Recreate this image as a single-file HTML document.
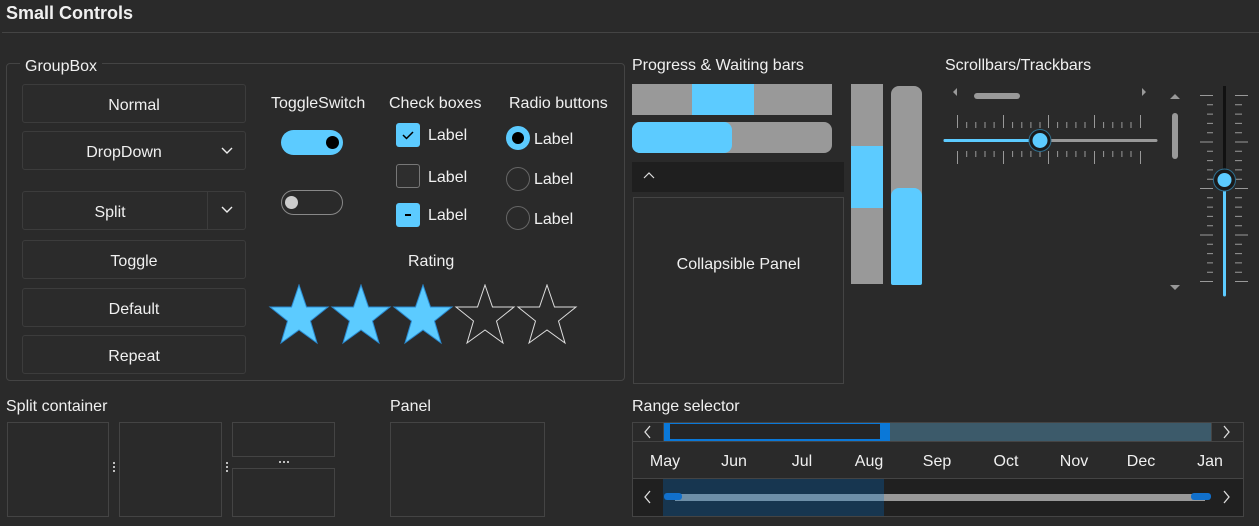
<!DOCTYPE html>
<html><head><meta charset="utf-8"><style>
*{box-sizing:border-box;margin:0;padding:0}
body{width:1259px;height:526px;background:#2a2a2a;color:#f0f0f0;font-family:"Liberation Sans",sans-serif;font-size:16px;position:relative;overflow:hidden}
.a{position:absolute}
.t{position:absolute;white-space:nowrap;line-height:20px}
.btn{position:absolute;left:22px;width:224px;height:39px;border:1px solid #3c3c3c;border-radius:3px;background:#2b2b2b;display:flex;align-items:center;justify-content:center;padding-top:4px}
.cb{position:absolute;left:396px;width:24px;height:24px;border-radius:3px}
.rb{position:absolute;left:506px;width:24px;height:24px;border-radius:50%}
.box{position:absolute;border:1px solid #444}
.mo{position:absolute;top:452px;width:50px;text-align:center;line-height:20px}
</style></head><body>
<div class="t" style="left:6px;top:3px;font-size:18px;font-weight:bold">Small Controls</div>
<div class="a" style="left:2px;right:0;top:32px;height:1px;background:#444"></div>

<div class="a" style="left:6px;top:63px;width:619px;height:318px;border:1px solid #444;border-radius:4px"></div>
<div class="t" style="left:20px;top:57px;padding:0 5px;background:#2a2a2a">GroupBox</div>
<div class="btn" style="top:84px">Normal</div>
<div class="btn" style="top:131px;padding-right:20px">DropDown<svg class="a" style="left:197px;top:14px" width="14" height="10"><path d="M2 2l5 5 5-5" stroke="#eee" fill="none" stroke-width="1.4"/></svg></div>
<div class="btn" style="top:191px;padding-right:48px">Split<div class="a" style="left:184px;top:0;width:1px;height:37px;background:#3c3c3c"></div><svg class="a" style="left:197px;top:13px" width="14" height="10"><path d="M2 2l5 5 5-5" stroke="#eee" fill="none" stroke-width="1.4"/></svg></div>
<div class="btn" style="top:240px">Toggle</div>
<div class="btn" style="top:288px">Default</div>
<div class="btn" style="top:335px">Repeat</div>

<div class="t" style="left:271px;top:94px">ToggleSwitch</div>
<div class="t" style="left:389px;top:94px">Check boxes</div>
<div class="t" style="left:509px;top:94px">Radio buttons</div>
<div class="a" style="left:281px;top:130px;width:62px;height:25px;border-radius:13px;background:#5ccbff"></div>
<div class="a" style="left:326px;top:136px;width:13px;height:13px;border-radius:50%;background:#000"></div>
<div class="a" style="left:281px;top:190px;width:62px;height:25px;border-radius:13px;border:1px solid #888"></div>
<div class="a" style="left:285px;top:196px;width:13px;height:13px;border-radius:50%;background:#ccc"></div>

<div class="cb" style="top:123px;background:#5ccbff"><svg width="24" height="24"><path d="M7 12l3.5 3.5L17 9" stroke="#000" stroke-width="1.5" fill="none"/></svg></div>
<div class="cb" style="top:164px;border:1px solid #777;background:#2e2e2e"></div>
<div class="cb" style="top:203px;background:#5ccbff"><div class="a" style="left:9px;top:11px;width:6px;height:2px;background:#000"></div></div>
<div class="t" style="left:428px;top:126px">Label</div>
<div class="t" style="left:428px;top:168px">Label</div>
<div class="t" style="left:428px;top:206px">Label</div>
<div class="rb" style="top:126px;background:#5ccbff"><div class="a" style="left:6px;top:6px;width:12px;height:12px;border-radius:50%;background:#000"></div></div>
<div class="rb" style="top:167px;border:1px solid #666"></div>
<div class="rb" style="top:206px;border:1px solid #666"></div>
<div class="t" style="left:534px;top:130px">Label</div>
<div class="t" style="left:534px;top:170px">Label</div>
<div class="t" style="left:534px;top:210px">Label</div>

<div class="t" style="left:408px;top:252px">Rating</div>
<svg class="a" style="left:268px;top:284px" width="312" height="62">
<defs><polygon id="s" points="31,1 38.5,23 60,23 42.5,37 49,59 31,46 13,59 19.5,37 2,23 23.5,23"/></defs>
<use href="#s" x="0" fill="#5ccbff" stroke="#2a8ad0" stroke-width="1"/>
<use href="#s" x="62" fill="#5ccbff" stroke="#2a8ad0" stroke-width="1"/>
<use href="#s" x="124" fill="#5ccbff" stroke="#2a8ad0" stroke-width="1"/>
<use href="#s" x="186" fill="none" stroke="#ddd" stroke-width="1"/>
<use href="#s" x="248" fill="none" stroke="#ddd" stroke-width="1"/>
</svg>

<div class="t" style="left:632px;top:56px">Progress &amp; Waiting bars</div>
<div class="a" style="left:632px;top:84px;width:200px;height:31px;background:#999"></div>
<div class="a" style="left:692px;top:84px;width:62px;height:31px;background:#5ccbff"></div>
<div class="a" style="left:632px;top:122px;width:200px;height:31px;background:#999;border-radius:8px"></div>
<div class="a" style="left:632px;top:122px;width:100px;height:31px;background:#5ccbff;border-radius:8px"></div>
<div class="a" style="left:632px;top:162px;width:212px;height:30px;background:#1f1f1f"></div>
<svg class="a" style="left:643px;top:171px" width="12" height="10"><path d="M1 7l5-5 5 5" stroke="#ddd" fill="none" stroke-width="1.2"/></svg>
<div class="box" style="left:633px;top:197px;width:211px;height:187px"></div>
<div class="t" style="left:633px;top:255px;width:211px;text-align:center">Collapsible Panel</div>
<div class="a" style="left:851px;top:84px;width:32px;height:200px;background:#999"></div>
<div class="a" style="left:851px;top:146px;width:32px;height:62px;background:#5ccbff"></div>
<div class="a" style="left:891px;top:86px;width:31px;height:199px;background:#999;border-radius:8px"></div>
<div class="a" style="left:891px;top:188px;width:31px;height:97px;background:#5ccbff;border-radius:8px 8px 2px 2px"></div>

<div class="t" style="left:945px;top:56px">Scrollbars/Trackbars</div>
<svg class="a" style="left:940px;top:80px" width="319" height="230">
<path d="M17 16l-4-4 4-4z M202 8l4 4-4 4z" fill="#999"/>
<rect x="34" y="13" width="46" height="6" rx="3" fill="#999"/>
<path d="M230 19l5-5 5 5z M230 205l5 5 5-5z" fill="#999"/>
<rect x="232" y="33" width="6" height="46" rx="3" fill="#999"/>
<g stroke="#999" stroke-width="1">
<path d="M17.5 35v13M26.7 42v6M35.8 42v6M45 42v6M54.1 42v6M63.5 35v13M72.6 42v6M81.8 42v6M90.9 42v6M100 42v6M108.5 35v13M117.6 42v6M126.8 42v6M135.9 42v6M145 42v6M154.5 35v13M163.6 42v6M172.8 42v6M181.9 42v6M191 42v6M200.5 35v13"/>
<path d="M17.5 71v13M26.7 71v6M35.8 71v6M45 71v6M54.1 71v6M63.5 71v13M72.6 71v6M81.8 71v6M90.9 71v6M100 71v6M108.5 71v13M117.6 71v6M126.8 71v6M135.9 71v6M145 71v6M154.5 71v13M163.6 71v6M172.8 71v6M181.9 71v6M191 71v6M200.5 71v13"/>
</g>
<line x1="5" y1="60.5" x2="216" y2="60.5" stroke="#999" stroke-width="3" stroke-linecap="round"/>
<line x1="5" y1="60.5" x2="100" y2="60.5" stroke="#5ccbff" stroke-width="3" stroke-linecap="round"/>
<circle cx="100" cy="60.5" r="11" fill="#1a1a1a" stroke="#2f6f8f" stroke-width="1"/>
<circle cx="100" cy="60.5" r="7.5" fill="#5ccbff"/>
<g stroke="#999" stroke-width="1">
<path d="M260 15.5h13M267 24.8h6M267 34.1h6M267 43.4h6M267 52.7h6M260 62h13M267 71.3h6M267 80.6h6M267 89.9h6M267 99.2h6M260 108.5h13M267 117.8h6M267 127.1h6M267 136.4h6M267 145.7h6M260 155h13M267 164.3h6M267 173.6h6M267 182.9h6M267 192.2h6M260 201.5h13"/>
<path d="M295 15.5h13M295 24.8h7M295 34.1h7M295 43.4h7M295 52.7h7M295 62h13M295 71.3h7M295 80.6h7M295 89.9h7M295 99.2h7M295 108.5h13M295 117.8h7M295 127.1h7M295 136.4h7M295 145.7h7M295 155h13M295 164.3h7M295 173.6h7M295 182.9h7M295 192.2h7M295 201.5h13"/>
</g>
<line x1="284.5" y1="6" x2="284.5" y2="215" stroke="#111" stroke-width="3"/>
<line x1="284.5" y1="100" x2="284.5" y2="215" stroke="#5ccbff" stroke-width="3" stroke-linecap="round"/>
<circle cx="284.5" cy="100" r="11" fill="#1a1a1a" stroke="#2f6f8f" stroke-width="1"/>
<circle cx="284.5" cy="100" r="7" fill="#5ccbff"/>
</svg>

<div class="t" style="left:6px;top:397px">Split container</div>
<div class="box" style="left:7px;top:422px;width:102px;height:95px"></div>
<div class="box" style="left:119px;top:422px;width:103px;height:95px"></div>
<div class="box" style="left:232px;top:422px;width:103px;height:35px"></div>
<div class="box" style="left:232px;top:468px;width:103px;height:49px"></div>
<svg class="a" style="left:110px;top:460px" width="8" height="14"><circle cx="4" cy="3" r="1" fill="#eee"/><circle cx="4" cy="7" r="1" fill="#eee"/><circle cx="4" cy="11" r="1" fill="#eee"/></svg>
<svg class="a" style="left:223px;top:460px" width="8" height="14"><circle cx="4" cy="3" r="1" fill="#eee"/><circle cx="4" cy="7" r="1" fill="#eee"/><circle cx="4" cy="11" r="1" fill="#eee"/></svg>
<svg class="a" style="left:277px;top:458px" width="14" height="8"><circle cx="3" cy="4" r="1" fill="#eee"/><circle cx="7" cy="4" r="1" fill="#eee"/><circle cx="11" cy="4" r="1" fill="#eee"/></svg>
<div class="t" style="left:390px;top:397px">Panel</div>
<div class="box" style="left:390px;top:422px;width:155px;height:95px"></div>

<div class="t" style="left:632px;top:397px">Range selector</div>
<div class="a" style="left:632px;top:422px;width:612px;height:95px;border:1px solid #444"></div>
<div class="a" style="left:663px;top:423px;width:548px;height:18px;background:#3c5a6a"></div>
<div class="a" style="left:663px;top:423px;width:227px;height:18px;background:#0a78d8"></div>
<div class="a" style="left:670px;top:424px;width:210px;height:15px;background:#252525"></div>
<div class="a" style="left:663px;top:423px;width:1px;height:18px;background:#444"></div>
<div class="a" style="left:1211px;top:423px;width:1px;height:18px;background:#444"></div>
<div class="a" style="left:632px;top:441px;width:612px;height:1px;background:#444"></div>
<div class="a" style="left:632px;top:478px;width:612px;height:1px;background:#444"></div>
<div class="a" style="left:633px;top:479px;width:610px;height:37px;background:#202020"></div>
<div class="a" style="left:663px;top:479px;width:221px;height:37px;background:#173650"></div>
<div class="a" style="left:675px;top:494px;width:530px;height:7px;background:#999"></div>
<div class="a" style="left:675px;top:494px;width:209px;height:7px;background:#6e8fa8"></div>
<div class="a" style="left:664px;top:493px;width:18px;height:7px;border-radius:3px;background:#1170cc"></div>
<div class="a" style="left:1191px;top:493px;width:20px;height:7px;border-radius:3px;background:#1170cc"></div>
<svg class="a" style="left:643px;top:425px" width="10" height="14"><path d="M7 1l-5 6 5 6" stroke="#ddd" fill="none" stroke-width="1.3"/></svg>
<svg class="a" style="left:1222px;top:425px" width="10" height="14"><path d="M2 1l5 6-5 6" stroke="#ddd" fill="none" stroke-width="1.3"/></svg>
<svg class="a" style="left:643px;top:490px" width="10" height="14"><path d="M7 1l-5 6 5 6" stroke="#ddd" fill="none" stroke-width="1.3"/></svg>
<svg class="a" style="left:1222px;top:490px" width="10" height="14"><path d="M2 1l5 6-5 6" stroke="#ddd" fill="none" stroke-width="1.3"/></svg>
<div class="mo" style="left:640px">May</div>
<div class="mo" style="left:709px">Jun</div>
<div class="mo" style="left:777px">Jul</div>
<div class="mo" style="left:844px">Aug</div>
<div class="mo" style="left:912px">Sep</div>
<div class="mo" style="left:981px">Oct</div>
<div class="mo" style="left:1049px">Nov</div>
<div class="mo" style="left:1116px">Dec</div>
<div class="mo" style="left:1185px">Jan</div>
</body></html>
